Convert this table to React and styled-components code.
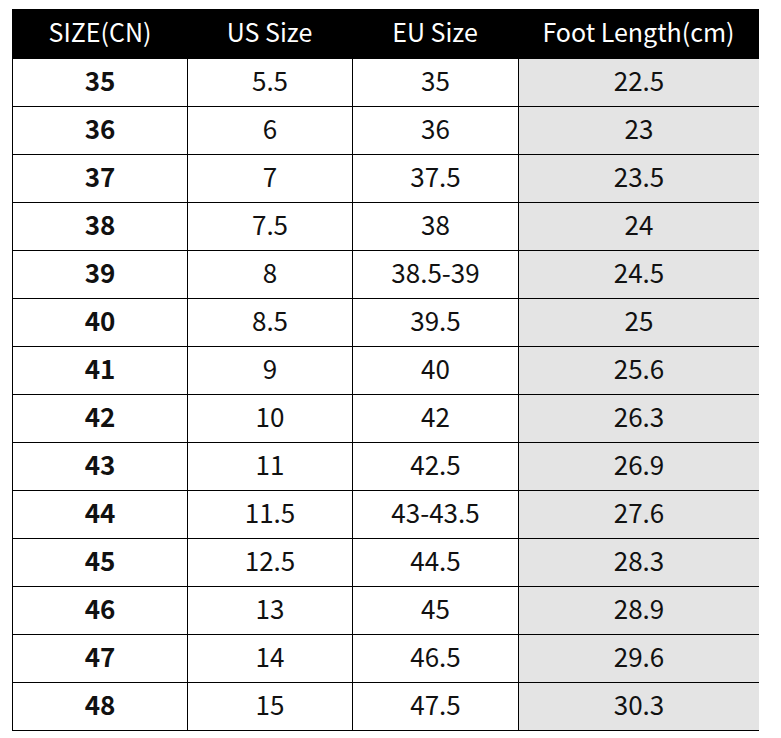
import React from 'react'
import styled, { createGlobalStyle } from 'styled-components'

const GlobalStyle = createGlobalStyle`
    html, body {
        margin: 0;
        padding: 0;
        background: #ffffff;
    }
    body {
        font-family: "Noto Sans CJK SC", "Noto Sans", sans-serif;
    }
`

const Page = styled.main`
    padding: 9px 0 0 12px;
    width: 781px;
    height: 738px;
    box-sizing: border-box;
`

const Table = styled.div`
    display: grid;
    grid-template-columns: 174px 165px 166px 241px;
    width: 747px;
    border: 1px solid #000;
    box-sizing: border-box;
`

const HeadCell = styled.div`
    height: 48px;
    box-sizing: border-box;
    padding-bottom: 7px;
    background: #000;
    color: #fff;
    font-size: 25px;
    display: flex;
    align-items: center;
    justify-content: center;
`

const Cell = styled.div`
    height: 48px;
    box-sizing: border-box;
    padding-bottom: 6px;
    border-top: 1px solid #000;
    border-left: ${p => (p.$first ? 'none' : '1px solid #000')};
    background: ${p => (p.$shade ? '#e4e4e4' : '#fff')};
    color: #111;
    font-size: 26px;
    font-weight: ${p => (p.$bold ? 700 : 400)};
    display: flex;
    align-items: center;
    justify-content: center;
`

const rows = [
    ['35', '5.5', '35', '22.5'],
    ['36', '6', '36', '23'],
    ['37', '7', '37.5', '23.5'],
    ['38', '7.5', '38', '24'],
    ['39', '8', '38.5-39', '24.5'],
    ['40', '8.5', '39.5', '25'],
    ['41', '9', '40', '25.6'],
    ['42', '10', '42', '26.3'],
    ['43', '11', '42.5', '26.9'],
    ['44', '11.5', '43-43.5', '27.6'],
    ['45', '12.5', '44.5', '28.3'],
    ['46', '13', '45', '28.9'],
    ['47', '14', '46.5', '29.6'],
    ['48', '15', '47.5', '30.3'],
]

export default function App() {
    return (
        <Page>
            <GlobalStyle />
            <Table>
                {['SIZE(CN)', 'US Size', 'EU Size', 'Foot Length(cm)'].map(h => (
                    <HeadCell key={h}>{h}</HeadCell>
                ))}
                {rows.map(r =>
                    r.map((v, i) => (
                        <Cell key={r[0] + '-' + i} $first={i === 0} $bold={i === 0} $shade={i === 3}>
                            {v}
                        </Cell>
                    ))
                )}
            </Table>
        </Page>
    )
}
